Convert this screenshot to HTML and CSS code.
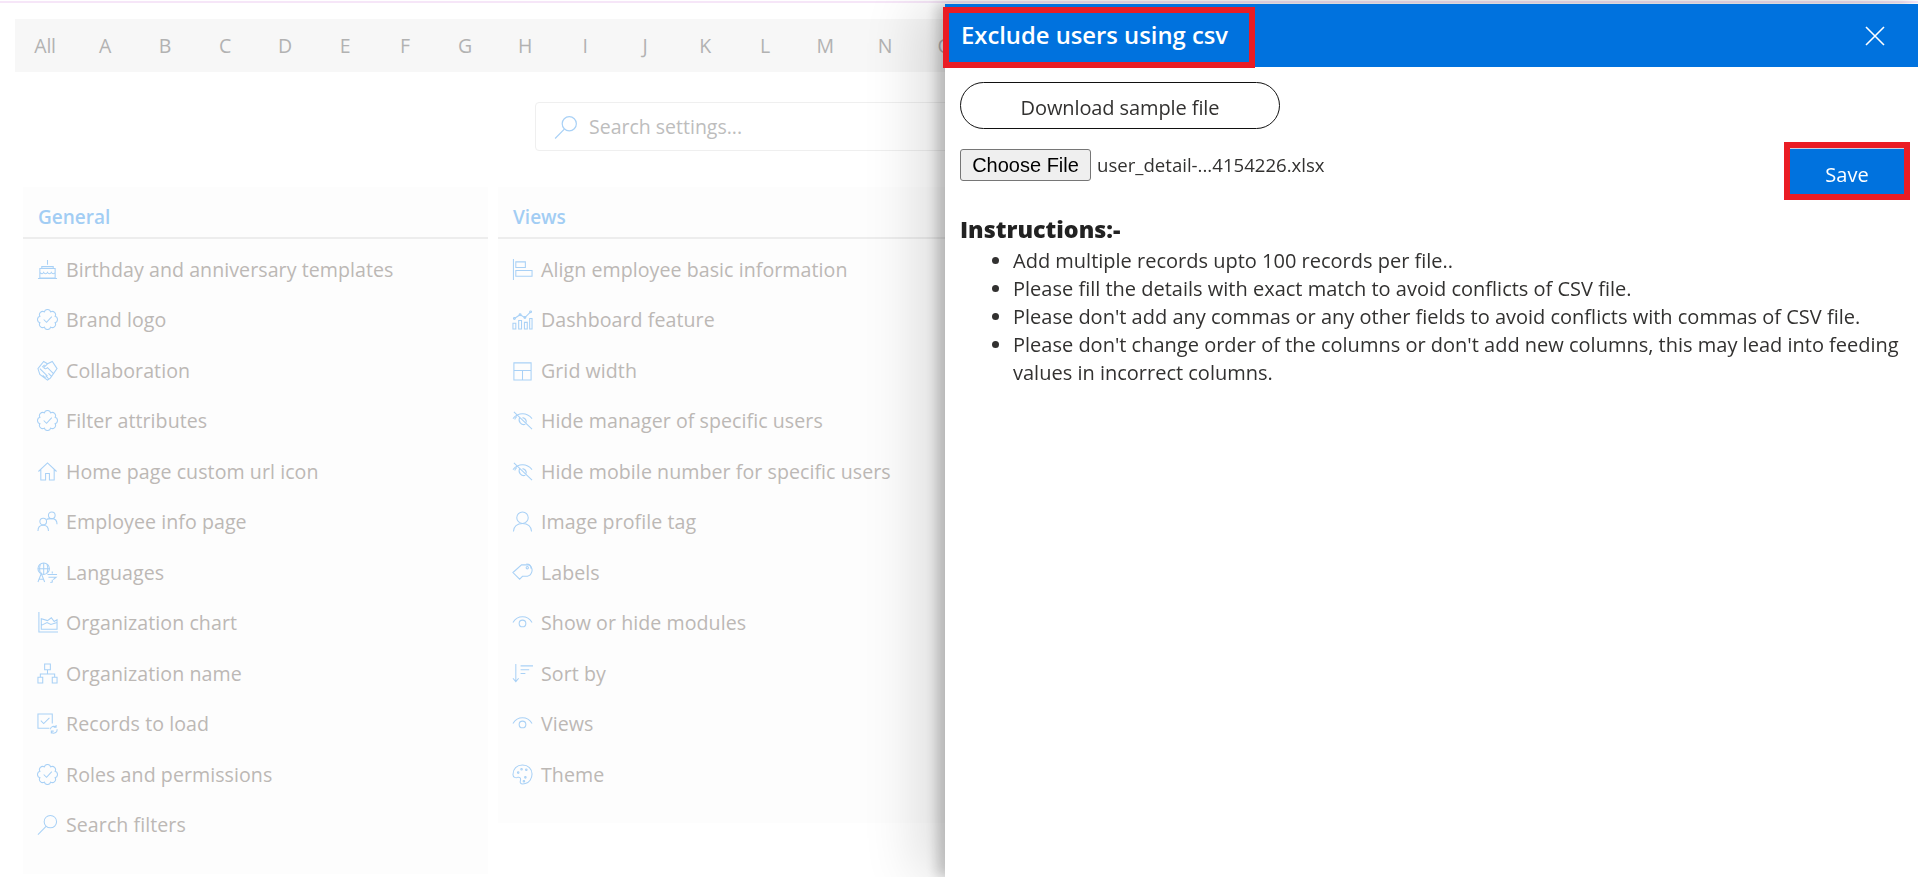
FILE: index.html
```html
<!DOCTYPE html>
<html lang="en">
<head>
<meta charset="utf-8">
<title>Settings</title>
<link rel="stylesheet" href="styles.css">
</head>
<body>
<svg class="sprite" aria-hidden="true">
  <symbol id="cake" viewBox="0 0 22 22"><path d="M11 1v5M3 10h16v10H3zM1 20.500h20M5 10V8h12v2M3 14c2 2 3 2 4 0 1 2 3 2 4 0 1 2 3 2 4 0 1 2 3 2 4 0"/></symbol>
  <symbol id="badge" viewBox="0 0 22 22"><path d="M7.710 3.050A3.400 3.400 0 0 1 14.290 3.050A3.400 3.400 0 0 1 18.950 7.710A3.400 3.400 0 0 1 18.950 14.290A3.400 3.400 0 0 1 14.290 18.950A3.400 3.400 0 0 1 7.710 18.950A3.400 3.400 0 0 1 3.050 14.290A3.400 3.400 0 0 1 3.050 7.710A3.400 3.400 0 0 1 7.710 3.050z"/><path d="M7 11l3 3 5.500-6"/></symbol>
  <symbol id="shake" viewBox="0 0 22 22"><path d="M7 1.500l4 2.500 5-2.500L21 9l-7 10-3 2-8-6-2-6zM11 4L7 8c1 2 3 1 4 0l6 6M3 9l8 8M5.500 7.500L8 5M9 19l-3-3M12 19.500l-3-3M15 17l-3-3"/></symbol>
  <symbol id="home" viewBox="0 0 22 22"><path d="M1.500 11L11 2l9.500 9M4 9v11h5v-7h4v7h5V9"/></symbol>
  <symbol id="people" viewBox="0 0 22 22"><circle cx="15.500" cy="4.500" r="3.500"/><circle cx="6.500" cy="11" r="3.500"/><path d="M10 9c1-1 3-1 5.500-1 3 0 5.500 2 5.500 6M1 21c0-4 2-6 5.500-6s5.500 2 5.500 6"/></symbol>
  <symbol id="lang" viewBox="0 0 22 22"><circle cx="7" cy="7" r="6"/><path d="M1 7h12M7 1v12M3.500 2.500c-1 3-1 6 0 9M10.500 2.500c1 3 1 6 0 9M1 21l3.500-9 3.500 9M2.300 18h4.500M11 13h10M16 10v2M12 16h8l-3 2.500M16 18.500V21l-2 .500"/></symbol>
  <symbol id="chart" viewBox="0 0 22 22"><path d="M2 0v21h20M4.500 18H21V8l-3 2-3-4-4 3-6.500-2zM4.500 14l6-3 4 2 6.500-2"/></symbol>
  <symbol id="org" viewBox="0 0 22 22"><path d="M8 1h6v6H8zM1 15h5v6H1zM16 15h5v6h-5zM11 7v4.500M3.500 15v-3.500h15V15"/></symbol>
  <symbol id="records" viewBox="0 0 22 22"><path d="M13 16H1V1h15v10M4 8l3 3 6-6M14 17a3.500 3.500 0 0 1 6-2M21 17a3.500 3.500 0 0 1-6 3M20 12.500V15h-2.500M15 21.500V19h2.500"/></symbol>
  <symbol id="search" viewBox="0 0 22 22"><circle cx="14" cy="8" r="6.500"/><path d="M9.500 13L1 21.500"/></symbol>
  <symbol id="align" viewBox="0 0 22 22"><path d="M1.500 0v22M4 3h10v6H4zM4 12h17v6H4z"/></symbol>
  <symbol id="dash" viewBox="0 0 22 22"><path d="M1 15h3v6H1zM7 12h3v9H7zM13 14h3v7h-3zM18.500 10H21v11h-2.500zM2.500 10l6-4 5 3 6-6"/><circle cx="2.500" cy="10" r="1"/><circle cx="8.500" cy="6" r="1"/><circle cx="13.500" cy="9" r="1"/><circle cx="19.500" cy="3" r="1"/></symbol>
  <symbol id="grid" viewBox="0 0 22 22"><path d="M2 3h18v18H2zM2 11h18M11 11v10"/></symbol>
  <symbol id="hide" viewBox="0 0 22 22"><path d="M2 2l19 18M1 9c2.500-3 6-5 10-5 4.500 0 7.500 2 10 5M5 7c-1 1-2 1.500-2 3M8 8a5 5 0 0 0 6 7M15 13a5 5 0 0 0-4-5"/></symbol>
  <symbol id="user" viewBox="0 0 22 22"><circle cx="11" cy="7" r="6"/><path d="M1.500 21.500c0-5 4-8.500 9.500-8.500s9.500 3.500 9.500 8.500"/></symbol>
  <symbol id="label" viewBox="0 0 22 22"><path d="M1 11L10 3h8c3 2 4 6 2 9-1 2-3 3-6 3H11l-3 3z"/><path d="M15 2c3 0 5 2 5 5"/><circle cx="16" cy="6" r="1.200"/></symbol>
  <symbol id="eye" viewBox="0 0 22 22"><path d="M1 11c2.500-4 6-6 10-6s7.500 2 10 6"/><circle cx="11" cy="12" r="3.500"/></symbol>
  <symbol id="sort" viewBox="0 0 22 22"><path d="M4 1v18M1 16l3 3.500L7 16M9 3h13M9 7h9M9 11h5"/></symbol>
  <symbol id="theme" viewBox="0 0 22 22"><path d="M11 1C5 1 1 5 1 11c0 3 3 4 5 3 2-.5 3 .5 3 2 0 2-1 3 0 4 1 1.500 3 1 5 .500 4-1 7-5 7-10C21 5 17 1 11 1z"/><circle cx="6.500" cy="9" r=".8"/><circle cx="10" cy="5.500" r=".8"/><circle cx="15" cy="6" r=".8"/><circle cx="14" cy="14" r=".8"/><circle cx="12.500" cy="18" r=".8"/></symbol>
</svg>

<div class="page">
  <div class="topline"></div>
  <nav class="alpha">
    <span>All</span><span>A</span><span>B</span><span>C</span><span>D</span><span>E</span><span>F</span><span>G</span><span>H</span><span>I</span><span>J</span><span>K</span><span>L</span><span>M</span><span>N</span><span>O</span>
  </nav>
  <div class="searchwrap">
    <div class="searchbox">
      <svg class="ico searchico"><use href="#search"/></svg>
      <span>Search settings...</span>
    </div>
  </div>
  <div class="cards">
    <section class="card">
      <h2>General</h2>
      <ul class="rows">
        <li><svg class="ico"><use href="#cake"/></svg>Birthday and anniversary templates</li>
        <li><svg class="ico"><use href="#badge"/></svg>Brand logo</li>
        <li><svg class="ico"><use href="#shake"/></svg>Collaboration</li>
        <li><svg class="ico"><use href="#badge"/></svg>Filter attributes</li>
        <li><svg class="ico"><use href="#home"/></svg>Home page custom url icon</li>
        <li><svg class="ico"><use href="#people"/></svg>Employee info page</li>
        <li><svg class="ico"><use href="#lang"/></svg>Languages</li>
        <li><svg class="ico"><use href="#chart"/></svg>Organization chart</li>
        <li><svg class="ico"><use href="#org"/></svg>Organization name</li>
        <li><svg class="ico"><use href="#records"/></svg>Records to load</li>
        <li><svg class="ico"><use href="#badge"/></svg>Roles and permissions</li>
        <li><svg class="ico"><use href="#search"/></svg>Search filters</li>
      </ul>
    </section>
    <section class="card card-views">
      <h2>Views</h2>
      <ul class="rows">
        <li><svg class="ico"><use href="#align"/></svg>Align employee basic information</li>
        <li><svg class="ico"><use href="#dash"/></svg>Dashboard feature</li>
        <li><svg class="ico"><use href="#grid"/></svg>Grid width</li>
        <li><svg class="ico"><use href="#hide"/></svg>Hide manager of specific users</li>
        <li><svg class="ico"><use href="#hide"/></svg>Hide mobile number for specific users</li>
        <li><svg class="ico"><use href="#user"/></svg>Image profile tag</li>
        <li><svg class="ico"><use href="#label"/></svg>Labels</li>
        <li><svg class="ico"><use href="#eye"/></svg>Show or hide modules</li>
        <li><svg class="ico"><use href="#sort"/></svg>Sort by</li>
        <li><svg class="ico"><use href="#eye"/></svg>Views</li>
        <li><svg class="ico"><use href="#theme"/></svg>Theme</li>
      </ul>
    </section>
  </div>
</div>

<aside class="panel">
  <header class="panel-head">
    <h1>Exclude users using csv</h1>
    <svg class="close" viewBox="0 0 20 20"><path d="M1 1l18 18M19 1L1 19"/></svg>
  </header>
  <div class="mark mark-title"></div>
  <div class="panel-body">
    <button class="download" type="button">Download sample file</button>
    <div class="filerow">
      <div class="file">
        <button class="choose" type="button">Choose File</button>
        <span class="filename">user_detail-...4154226.xlsx</span>
      </div>
      <div class="savewrap"><button class="save" type="button">Save</button></div>
    </div>
    <h3>Instructions:-</h3>
    <ul class="notes">
      <li>Add multiple records upto 100 records per file..</li>
      <li>Please fill the details with exact match to avoid conflicts of CSV file.</li>
      <li>Please don't add any commas or any other fields to avoid conflicts with commas of CSV file.</li>
      <li>Please don't change order of the columns or don't add new columns, this may lead into feeding values in incorrect columns.</li>
    </ul>
  </div>
</aside>
</body>
</html>
```

FILE: styles.css
```css
* { box-sizing: border-box; }
html, body { margin: 0; height: 100%; overflow: hidden; }
body { background: #fff; font-family: "Open Sans", "Liberation Sans", sans-serif; }
.sprite { display: none; }

.topline { height: 3px; border-bottom: 2px solid #f6e6f8; }

.alpha {
  display: flex;
  margin: 16px 15px 0;
  height: 53px;
  background: #f7f7f7;
  color: #b2b2b2;
  font-size: 19.500px;
  letter-spacing: -.3px;
  align-items: center;
}
.alpha span { flex: 0 0 60px; text-align: center; }

.searchwrap { display: flex; justify-content: center; margin-top: 30px; }
.searchbox {
  display: flex;
  align-items: center;
  gap: 11px;
  width: 848px;
  height: 49px;
  padding-left: 18px;
  border: 1px solid #efefef;
  border-radius: 4px;
  color: #bdbdbd;
  font-size: 19.500px;
}

.ico {
  flex: none;
  width: 21px;
  height: 21px;
  fill: none;
  stroke: #a9d1f6;
  stroke-width: 1.100;
}
.searchico { width: 24px; height: 24px; }

.cards { display: grid; grid-template-columns: 465px 465px; gap: 10px; margin: 36px 0 0 23px; align-items: start; }
.card { background: #fdfdfd; height: 687px; }
.card-views { height: 636px; }
.card h2 {
  margin: 0;
  height: 52px;
  padding: 15px 0 0 15px;
  border-bottom: 2px solid #ededed;
  color: #a2cdf4;
  font-size: 19px;
  font-weight: 600;
  line-height: 30px;
}
.rows { list-style: none; margin: 5px 0 0; padding: 0 0 0 14px; }
.rows li {
  display: flex;
  align-items: center;
  gap: 8px;
  height: 50.500px;
  color: #bcb8b5;
  font-size: 19.600px;
  letter-spacing: .06px;
  white-space: nowrap;
}

.panel {
  position: fixed;
  top: 4px; right: 0; bottom: 0; left: 945px;
  background: #fff;
  color: #323130;
  box-shadow: -8px 0 12px rgba(0,0,0,.2), -30px 0 50px rgba(0,0,0,.12);
}
.panel-head {
  display: flex;
  align-items: center;
  justify-content: space-between;
  height: 63px;
  padding: 0 33px 2px 16px;
  background: #0072de;
  color: #fff;
}
.panel-head h1 { margin: 0; font-size: 23.800px; font-weight: 600; }
.close { width: 20px; height: 20px; margin-top: 2px; fill: none; stroke: #fff; stroke-width: 1.600; }

.mark { position: absolute; border: 6px solid #ea1c24; }
.mark-title { left: -2px; top: 3px; width: 312px; height: 61px; }

.panel-body { padding: 15px 8px 0 15px; }
.download {
  display: block;
  width: 320px;
  height: 47px;
  padding: 4px 0 0;
  border: 1px solid #111;
  border-radius: 24px;
  background: #fff;
  color: #323130;
  font-family: inherit;
  font-size: 20px;
  letter-spacing: -.1px;
}
.filerow { display: flex; justify-content: space-between; align-items: flex-start; margin-top: 20px; }
.file { display: flex; align-items: center; gap: 6px; }
.choose {
  width: 131px;
  height: 32px;
  padding: 0;
  border: 1px solid #767676;
  border-radius: 3px;
  background: #efefef;
  color: #000;
  font-family: "Liberation Sans", Arial, sans-serif;
  font-size: 20px;
}
.filename { margin-top: -2px; font-size: 18.600px; }
.savewrap { margin-top: -7px; border: 6px solid #ea1c24; }
.save {
  display: block;
  width: 114px;
  height: 46px;
  border: 0;
  border-top: 1px solid #ccd;
  padding: 6px 0 0;
  background: #0072de;
  color: #fff;
  font-family: inherit;
  font-size: 20px;
}
h3 { margin: 14px 0 0; font-size: 23.300px; font-weight: 800; line-height: 30px; color: #222; }
.notes { margin: 3px 0 0; padding: 0 0 0 53px; font-size: 20px; line-height: 28px; }
```
